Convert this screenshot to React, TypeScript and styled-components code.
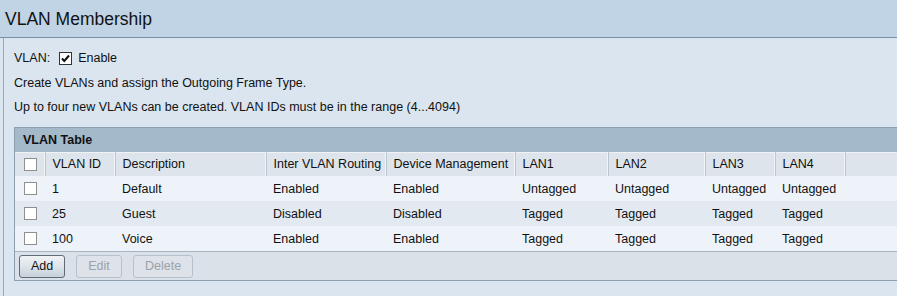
import React from "react";
import styled, { createGlobalStyle } from "styled-components";

const Global = createGlobalStyle`
  html, body { margin: 0; padding: 0; background: #dae5f0; overflow: hidden; }
  body { font-family: "Liberation Sans", Arial, sans-serif; font-size: 12.5px; color: #111; }
`;

const Page = styled.div`
  width: 897px;
  height: 296px;
  display: flex;
  flex-direction: column;
  background: #dae5f0;
  overflow: hidden;
`;

const Header = styled.div`
  height: 38px;
  background: #c1d4e5;
  border-bottom: 1px solid #7d90a2;
  display: flex;
  align-items: center;
  padding-left: 5px;
  padding-top: 1px;
  box-sizing: border-box;
  font-size: 17.5px;
  color: #111;
`;

const Content = styled.div`
  flex: 1;
  margin-left: 3px;
  border-left: 1px solid #9aaabb;
  padding: 8px 0 0 10px;
  display: flex;
  flex-direction: column;
  width: 1000px;
`;

const Line = styled.div`
  height: 24.5px;
  display: flex;
  align-items: center;
  gap: 6px;
`;

const Box = styled.span<{ $checked?: boolean }>`
  width: 13px;
  height: 13px;
  box-sizing: border-box;
  border: 1px solid ${(p) => (p.$checked ? "#333" : "#8e8f8f")};
  background: #fff;
  display: inline-flex;
  align-items: center;
  justify-content: center;
  flex: none;
`;

const Label = styled.span<{ $gap?: number }>`
  margin-right: ${(p) => p.$gap ?? 0}px;
`;

const TableBox = styled.div`
  margin-top: 7px;
  width: 920px;
  border: 1px solid #8d9fae;
  border-right: none;
  background: #dae1e8;
`;

const TitleBar = styled.div`
  height: 24px;
  background: #a4b9c9;
  display: flex;
  align-items: center;
  padding-left: 8px;
  font-weight: bold;
  color: #111;
`;

const Table = styled.table`
  border-collapse: collapse;
  table-layout: fixed;
  width: 100%;
`;

const Th = styled.th<{ $w?: number }>`
  box-sizing: border-box;
  width: ${(p) => (p.$w ? `${p.$w}px` : "auto")};
  height: 24px;
  padding: 0 0 0 7px;
  text-align: left;
  font-weight: normal;
  background: #dde4eb;
  border-right: 1px solid #bcc6cf;
  box-shadow: inset -1px 0 0 #f2f5f8;
  border-top: 1px solid #f0f3f6;
  white-space: nowrap;
  overflow: hidden;
  &:last-child { border-right: none; box-shadow: none; }
`;

const Tr = styled.tr<{ $alt?: boolean }>`
  background: ${(p) => (p.$alt ? "#e2e9f1" : "#eef3f9")};
`;

const Td = styled.td`
  box-sizing: border-box;
  height: 25px;
  padding: 0 0 0 7px;
  white-space: nowrap;
  overflow: hidden;
`;

const BoxCell = styled.div`
  display: flex;
  align-items: center;
  padding-left: 2px;
`;

const ButtonBar = styled.div`
  height: 28px;
  border-top: 1px solid #a9b5c0;
  display: flex;
  align-items: center;
  gap: 11px;
  padding-left: 4px;
`;

const Button = styled.button<{ $disabled?: boolean }>`
  box-sizing: border-box;
  height: 23px;
  min-width: 46px;
  padding: 0 ${(p) => (p.$disabled ? "11px" : "0")};
  font-family: "Liberation Sans", Arial, sans-serif;
  font-size: 12.5px;
  border-radius: 3px;
  border: 1px solid ${(p) => (p.$disabled ? "#b7c1cb" : "#5f6b76")};
  color: ${(p) => (p.$disabled ? "#9aa2aa" : "#111")};
  background: ${(p) =>
    p.$disabled
      ? "#dde3e9"
      : "linear-gradient(#f0f3f6, #dde4ea 50%, #c7d1da)"};
`;

const Check = () => (
  <svg width="11" height="11" viewBox="0 0 11 11">
    <path d="M2 5.5 L4.3 8 L9 2.5" fill="none" stroke="#111" strokeWidth="2" />
  </svg>
);

const cols = [
  { t: "VLAN ID", w: 70 },
  { t: "Description", w: 151 },
  { t: "Inter VLAN Routing", w: 120 },
  { t: "Device Management", w: 129 },
  { t: "LAN1", w: 93 },
  { t: "LAN2", w: 97 },
  { t: "LAN3", w: 70 },
  { t: "LAN4", w: 70 },
];

const rows = [
  ["1", "Default", "Enabled", "Enabled", "Untagged", "Untagged", "Untagged", "Untagged"],
  ["25", "Guest", "Disabled", "Disabled", "Tagged", "Tagged", "Tagged", "Tagged"],
  ["100", "Voice", "Enabled", "Enabled", "Tagged", "Tagged", "Tagged", "Tagged"],
];

export default function App() {
  return (
    <Page>
      <Global />
      <Header>VLAN Membership</Header>
      <Content>
        <Line>
          <Label $gap={3}>VLAN:</Label>
          <Box $checked>
            <Check />
          </Box>
          <Label>Enable</Label>
        </Line>
        <Line>Create VLANs and assign the Outgoing Frame Type.</Line>
        <Line>Up to four new VLANs can be created. VLAN IDs must be in the range (4...4094)</Line>
        <TableBox>
          <TitleBar>VLAN Table</TitleBar>
          <Table>
            <thead>
              <tr>
                <Th $w={30}>
                  <BoxCell>
                    <Box />
                  </BoxCell>
                </Th>
                {cols.map((c) => (
                  <Th key={c.t} $w={c.w}>
                    {c.t}
                  </Th>
                ))}
                <Th />
              </tr>
            </thead>
            <tbody>
              {rows.map((r, i) => (
                <Tr key={r[0]} $alt={i === 1}>
                  <Td>
                    <BoxCell>
                      <Box />
                    </BoxCell>
                  </Td>
                  {r.map((v, j) => (
                    <Td key={j}>{v}</Td>
                  ))}
                  <Td />
                </Tr>
              ))}
            </tbody>
          </Table>
          <ButtonBar>
            <Button>Add</Button>
            <Button $disabled>Edit</Button>
            <Button $disabled>Delete</Button>
          </ButtonBar>
        </TableBox>
      </Content>
    </Page>
  );
}
